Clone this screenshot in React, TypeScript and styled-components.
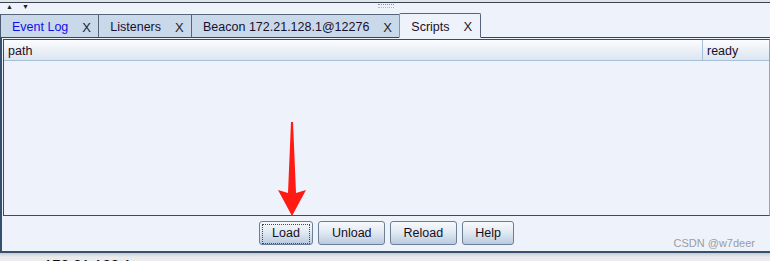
import styled, { createGlobalStyle } from 'styled-components';

const GlobalStyle = createGlobalStyle`
  body {
    margin: 0;
    background: #eef2fa;
    font-family: "Liberation Sans", Arial, sans-serif;
  }
`;

const tabs = [
  { label: 'Event Log', accent: true },
  { label: 'Listeners' },
  { label: 'Beacon 172.21.128.1@12276' },
  { label: 'Scripts', active: true },
];

const buttons = ['Load', 'Unload', 'Reload', 'Help'];

const App = () => {
  return (
    <Window>
      <GlobalStyle />
      <TopBar>
        <Arrows>
          <span>▲</span>
          <span>▼</span>
        </Arrows>
        <Grip />
      </TopBar>
      <TabStrip>
        {tabs.map((t) => (
          <Tab key={t.label} $active={!!t.active}>
            <TabLabel $accent={!!t.accent}>{t.label}</TabLabel>
            <Close>X</Close>
          </Tab>
        ))}
        <TabFill />
      </TabStrip>
      <Panel>
        <Table>
          <HeaderRow>
            <HeaderCell $grow>path</HeaderCell>
            <HeaderCell>ready</HeaderCell>
          </HeaderRow>
        </Table>
        <ButtonRow>
          {buttons.map((b, i) => (
            <Button key={b} $focused={i === 0}>
              <span>{b}</span>
            </Button>
          ))}
        </ButtonRow>
        <Watermark>CSDN @w7deer</Watermark>
      </Panel>
      <Below>
        <BelowText>172.21.128.1</BelowText>
      </Below>
      <Pointer width="32" height="96" viewBox="0 0 32 96">
        <polygon points="15,0 17,0 20,71 30,68 16,94 2,68 12,71" fill="#ff1a14" />
      </Pointer>
    </Window>
  );
};

const Window = styled.div`
  position: relative;
  width: 770px;
  height: 261px;
  overflow: hidden;
  display: flex;
  flex-direction: column;
  background: #eef2fa;
`;

const TopBar = styled.div`
  height: 10px;
  margin-top: 2px;
  border-top: 1px solid #3c4350;
  box-shadow: 0 -2px 0 #dfe3ea;
  display: flex;
  align-items: center;
  position: relative;
`;

const Arrows = styled.div`
  display: flex;
  gap: 9px;
  padding-left: 6px;
  font-size: 7px;
  line-height: 7px;
  color: #222;
  margin-top: -4px;
`;

const Grip = styled.div`
  position: absolute;
  left: 378px;
  top: 1px;
  width: 16px;
  height: 2px;
  border-top: 1px dotted #8890a0;
  border-bottom: 1px dotted #b0b8c4;
`;

const TabStrip = styled.div`
  display: flex;
  align-items: flex-end;
  height: 25px;
`;

const Tab = styled.div<{ $active: boolean }>`
  display: flex;
  align-items: center;
  gap: 14px;
  height: ${(p) => (p.$active ? 25 : 24)}px;
  box-sizing: border-box;
  padding: 2px 8px 0 11px;
  font-size: 12.5px;
  color: #1a0f2a;
  background: ${(p) => (p.$active ? '#eef2fa' : '#c9d9ea')};
  border: 1px solid #56657a;
  border-left-color: ${(p) => (p.$active ? '#8796aa' : '#56657a')};
  border-bottom: ${(p) => (p.$active ? '1px solid #eef2fa' : '1px solid #3c4350')};
  border-radius: ${(p) => (p.$active ? '2px 2px 0 0' : '0')};
  margin-left: -1px;
  &:first-child {
    margin-left: 0;
    border-left-color: #4a5a70;
  }
`;

const TabLabel = styled.span<{ $accent: boolean }>`
  color: ${(p) => (p.$accent ? '#1010ee' : '#1a0f2a')};
`;

const Close = styled.span`
  width: 8px;
  font-size: 13px;
  color: #1f1d2c;
`;

const TabFill = styled.div`
  flex: 1;
  align-self: stretch;
  border-bottom: 1px solid #3c4350;
`;

const Panel = styled.div`
  position: relative;
  height: 215px;
  box-sizing: border-box;
  display: flex;
  flex-direction: column;
  padding: 1px 0 0 1px;
  border-left: 2px solid #34506c;
  border-bottom: 2px solid #34506c;
`;

const Table = styled.div`
  height: 177px;
  box-sizing: border-box;
  border: 1px solid #4a4a4e;
  border-right-color: #9aa4b0;
  background: #eef2fa;
`;

const HeaderRow = styled.div`
  display: flex;
  height: 21px;
  box-sizing: border-box;
  border-bottom: 1px solid #a6bfd8;
  background: linear-gradient(#fbfcfe, #dce5f0);
`;

const HeaderCell = styled.div<{ $grow?: boolean }>`
  ${(p) => (p.$grow ? 'flex: 1;' : 'width: 62px;')}
  padding: 2px 0 0 4px;
  font-size: 12.5px;
  line-height: 18px;
  color: #1a0f2a;
  border-right: ${(p) => (p.$grow ? '1px solid #a6bfd8' : 'none')};
`;

const ButtonRow = styled.div`
  display: flex;
  justify-content: center;
  gap: 5px;
  padding: 5px 0 0 0;
`;

const Button = styled.button<{ $focused: boolean }>`
  height: 24px;
  padding: 2px;
  box-sizing: border-box;
  border: 1px solid #6d7f96;
  border-radius: 3px;
  background: linear-gradient(#f7f9fc 0%, #e3eaf3 45%, #b9cbe0 100%);
  font-family: "Liberation Sans", Arial, sans-serif;
  font-size: 12.5px;
  color: #14101f;
  cursor: pointer;
  span {
    display: block;
    height: 18px;
    line-height: 17px;
    padding: 0 9.5px;
    border: 1px ${(p) => (p.$focused ? 'dotted #3a4a60' : 'solid transparent')};
  }
`;

const Watermark = styled.div`
  position: absolute;
  right: 15px;
  bottom: 2px;
  font-size: 11px;
  color: #9a9ca4;
`;

const Below = styled.div`
  flex: 1;
  background: linear-gradient(#c8cacd, #eaebed 4px);
  padding-left: 44px;
  overflow: hidden;
`;

const BelowText = styled.div`
  font-size: 15px;
  line-height: 15px;
  margin-top: 4px;
  color: #111;
`;

const Pointer = styled.svg`
  position: absolute;
  left: 276px;
  top: 122px;
`;

export default App;
